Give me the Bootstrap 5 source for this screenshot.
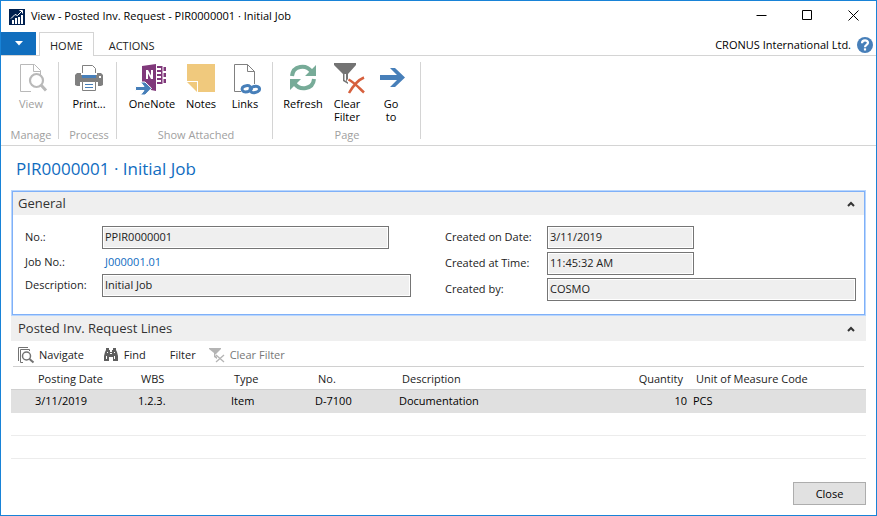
<!DOCTYPE html>
<html lang="en">
<head>
<meta charset="utf-8">
<meta name="viewport" content="width=device-width, initial-scale=1">
<title>View - Posted Inv. Request - PIR0000001 · Initial Job</title>
<link href="https://cdn.jsdelivr.net/npm/bootstrap@5.3.0/dist/css/bootstrap.min.css" rel="stylesheet">
<style>
  body { font-family: "Open Sans", "Noto Sans", sans-serif; font-size: 11px; line-height: 16px; color: #000; background: #fff; }
  button { color: inherit; }
  svg { display: block; overflow: visible; flex: none; }
  .app-window { border: 1px solid #1883d7; }
  .title-bar { height: 31px; padding-left: 8px; }
  .title-text { gap: 6px; }
  .title-bar h1 { font-size: 11px; line-height: 16px; font-weight: 400; padding-bottom: 2px; }
  .caption-btn { width: 46px; height: 29px; }
  .plain-btn { background: none; border: 0; padding: 0; }
  .tab-row { height: 24px; border-bottom: 1px solid #d4d4d4; }
  .file-btn { width: 35px; height: 23px; background: #106ebe; color: #fff; margin-right: 3px; }
  .ribbon-tab { height: 24px; padding: 0 10px; color: #222; text-decoration: none; border: 1px solid transparent; border-bottom: 0; line-height: 26px; }
  .ribbon-tab.current { border-color: #d4d4d4; background: #fff; }
  .company { padding: 2px 3px 0 0; gap: 6px; }
  .ribbon { height: 90px; border-bottom: 1px solid #d4d4d4; padding: 6px 0 0 0; }
  .ribbon-group { height: 77px; border-right: 1px solid #d4d4d4; padding: 0 5px 0 8px; }
  .ribbon-group:last-child { padding-right: 7px; }
  .ribbon-group .group-name { color: #a0a0a0; line-height: 8px; }
  .ribbon-btn { width: 44px; line-height: 13px; }
  .ribbon-btn.wide { width: 54px; }
  .ribbon-btn svg { margin: 0 auto 3px; }
  .ribbon-btn:disabled { color: #a0a0a0; }
  .page-title { color: #0f6cbf; font-size: 17px; line-height: 24px; font-weight: 400; padding: 11px 15px 9px; margin: 0; }
  .page-body { padding: 0 10px; }
  .general { border: 1px solid #b9d6fd; }
  .general-inner { border: 1px solid #7fb0f8; }
  .section-head { background: #efefef; color: #333; height: 23px; padding: 0 9px 0 5px; }
  .section-head h2 { font-size: 13px; line-height: 20px; font-weight: 400; margin: 0; padding-bottom: 1px; }
  .section-head.lines { height: 25px; padding: 0 11px 0 7px; }
  .general-fields { display: grid; grid-template-columns: 386fr 411fr; column-gap: 34px; padding: 11px 8px 13px 12px; color: #222; }
  .field-row { height: 23px; }
  .field-row.link-row { height: 25px; }
  .field-row label { flex: none; width: 77px; padding-bottom: 2px; }
  .field-row .field-label { flex: none; width: 77px; }
  .right-fields { row-gap: 3px; }
  .right-fields label { width: 102px; }
  .box { min-width: 0; height: 23px; border: 1px solid #757575; border-radius: 0; padding: 0 2px 2px; background: #efefef; box-shadow: inset 0 0 0 1px #fff; color: #222; outline: 0; }
  .box.short { flex: none; width: 147px; }
  .box.with-lookup { margin-right: 22px; }
  .job-link { color: #0f6cbf; text-decoration: none; padding-left: 3px; }
  .line-tools { height: 26px; margin: 0 2px; padding: 2px 0 0 5px; border-bottom: 1px solid #d0d0d0; color: #222; }
  .line-tools button { gap: 5px; }
  .line-tools .find-btn { margin: 0 24px 0 19px; }
  .line-tools .filter-btn { margin-right: 13px; }
  .line-tools button:disabled { color: #777; }
  .lines-table { width: 100%; table-layout: fixed; border-collapse: separate; border-spacing: 0; margin: 0; }
  .lines-table th, .lines-table td { padding: 0 2px; height: 23px; border-bottom: 1px solid #ececec; white-space: nowrap; }
  .lines-table th { font-weight: 400; color: #222; padding: 2px 5px 0; border-bottom-color: #d0d0d0; }
  .lines-table th.text-end { padding-right: 8px; }
  .lines-table td.text-end { padding-right: 4px; }
  .lines-table .picked td { background: #e0e0e0; border-bottom-color: #e0e0e0; }
  .c-lead { width: 22px; } .c-date { width: 103px; } .c-wbs { width: 93px; } .c-code { width: 84px; } .c-qty { width: 90px; } .c-unit { width: 175px; }
  .page-foot { padding: 0 10px 10px; }
  .close-btn { width: 73px; height: 23px; background: #e1e1e1; border: 1px solid #adadad; padding: 0; }
</style>
</head>
<body>
<div class="app-window d-flex flex-column min-vh-100">
  <header>
    <div class="title-bar d-flex align-items-start justify-content-between">
      <div class="title-text d-flex align-items-center h-100">
        <svg width="16" height="16" viewBox="0 0 16 16" aria-hidden="true">
          <path fill="#002050" d="M0 0h16v16H0z"/>
          <path fill="#fff" d="M3 11h2v4H3zM6 9h2v6H6zM9 8h2v7H9zM12 6h2v9h-2z"/>
          <path fill="none" stroke="#fff" d="M2 9.500 6 5.500l2.500 1L13 2M10.500 1.500h3v3"/>
        </svg>
        <h1 class="mb-0">View - Posted Inv. Request - PIR0000001 · Initial Job</h1>
      </div>
      <div class="d-flex">
        <button class="plain-btn caption-btn" type="button" aria-label="Minimize"><svg class="mx-auto" width="11" height="11" viewBox="0 0 11 11"><path stroke="#000" d="M.5 5.500h10"/></svg></button>
        <button class="plain-btn caption-btn" type="button" aria-label="Maximize"><svg class="mx-auto" width="11" height="11" viewBox="0 0 11 11"><path fill="none" stroke="#000" d="M.5.5h9v9h-9z"/></svg></button>
        <button class="plain-btn caption-btn" type="button" aria-label="Close window"><svg class="mx-auto" width="11" height="11" viewBox="0 0 11 11"><path stroke="#000" d="m.5.5 10 10M10.500.5l-10 10"/></svg></button>
      </div>
    </div>

    <nav class="tab-row d-flex justify-content-between">
      <div class="d-flex">
        <button class="plain-btn file-btn" type="button" aria-label="Application menu"><svg class="mx-auto" width="8" height="5" viewBox="0 0 8 5"><path fill="#fff" d="M0 0h8L4 4.500z"/></svg></button>
        <a class="ribbon-tab current" href="#">HOME</a>
        <a class="ribbon-tab ms-1" href="#">ACTIONS</a>
      </div>
      <div class="company d-flex align-items-center">
        <span>CRONUS International Ltd.</span>
        <button class="plain-btn" type="button" aria-label="Help"><svg width="16" height="16" viewBox="0 0 16 16"><circle cx="8" cy="8" r="8" fill="#477fb9"/><path fill="none" stroke="#fff" stroke-width="2.200" d="M5 6.200C5 2.500 11 2.600 11 5.800 11 8 8 7.800 8 10.200"/><path fill="#fff" d="M6.900 11.300h2.200v2.200H6.900z"/></svg></button>
      </div>
    </nav>

    <div class="ribbon d-flex">
      <section class="ribbon-group d-flex flex-column align-items-center justify-content-between">
        <button class="plain-btn ribbon-btn" type="button" disabled>
          <svg width="32" height="32" viewBox="0 0 32 32"><g fill="none" stroke="#b9b9b9"><path d="M16 29.500H5.500v-27h14l6 6V14M18.500 2.500v7h7"/><circle cx="21.500" cy="18.500" r="6.500" stroke-width="2.200"/><path stroke-width="3" d="m26 23 5 5.500"/></g></svg>View
        </button>
        <span class="group-name">Manage</span>
      </section>
      <section class="ribbon-group d-flex flex-column align-items-center justify-content-between">
        <button class="plain-btn ribbon-btn" type="button">
          <svg width="32" height="32" viewBox="0 0 32 32"><path fill="#808080" d="M4 11h24l2 2v10l-2 1h-3v-4H7v4H4l-2-1V13z"/><path fill="#fff" stroke="#808080" d="M9.500 14V3.500h10l3 3V14M9.500 19.500h13v9h-13z"/><path fill="#fff" d="M8 11h16v2H8z"/><path fill="#477fb9" d="M9 13h14v3H9zM12 22h8v1h-8zM12 25h8v1h-8z"/><path fill="#fff" d="M26 14h2v2h-2z"/></svg>Print...
        </button>
        <span class="group-name">Process</span>
      </section>
      <section class="ribbon-group d-flex flex-column align-items-center justify-content-between">
        <div class="d-flex align-items-start">
          <button class="plain-btn ribbon-btn wide" type="button">
            <svg width="32" height="32" viewBox="0 0 32 32"><path fill="#80397b" d="m6 4 14-2v27l-5-1-6-7H6z"/><path fill="#80397b" d="M21 4h5v2h-5zM21 20h5v2h-5zM21 8h4v2h-4zM21 12h4v2h-4zM21 16h4v2h-4zM25 4h1.500v18H25zM27.500 5H30v4h-2.500zM27.500 11H30v4h-2.500zM27.500 17H30v4h-2.500z"/><path fill="#fff" d="M10 8h2l3 5.500V8h2v9h-2l-3-5.500V17h-2z"/><path fill="#477fb9" stroke="#fff" d="M-.5 24.500H8L4.500 20H9l6.500 6.300L9 33H4.500L8 28.500H-.5z"/></svg>OneNote
          </button>
          <button class="plain-btn ribbon-btn" type="button">
            <svg width="32" height="32" viewBox="0 0 32 32"><path fill="#f0c97d" d="M2 2h28v28H13V19H2z"/><path fill="#f0c97d" d="M2 20h10v10z"/></svg>Notes
          </button>
          <button class="plain-btn ribbon-btn" type="button">
            <svg width="32" height="32" viewBox="0 0 32 32"><path fill="none" stroke="#808080" d="M12 29.500H5.500v-27h13l7 7V22M18.500 2.500v7h7"/><g fill="none" stroke="#477fb9" stroke-width="3" stroke-linecap="round"><path d="M21 24.500c-1.500-1.500-6-1-7.500 1-1.500 2.500.5 4.500 3 4.500 3 0 4.500-.5 6-3"/><path d="M22.500 30.200c1.500 1 6 .5 7.500-1.500 1.500-2.500-.5-4.500-3-4.500-3 0-4.500.5-6 3"/></g></svg>Links
          </button>
        </div>
        <span class="group-name">Show Attached</span>
      </section>
      <section class="ribbon-group d-flex flex-column align-items-center justify-content-between">
        <div class="d-flex align-items-start">
          <button class="plain-btn ribbon-btn" type="button">
            <svg width="32" height="32" viewBox="0 0 32 32"><g fill="none" stroke="#77ab98" stroke-width="4"><path d="M5 14C6 3.500 19 2 24.500 9.500M27 17C26 27.500 13 29 7.500 21.500"/></g><path fill="#77ab98" d="M29 3v11H18zM3 28V17h11z"/></svg>Refresh
          </button>
          <button class="plain-btn ribbon-btn" type="button">
            <svg width="32" height="32" viewBox="0 0 32 32"><path fill="#737373" d="M3 1h22v2l-8 9v10l-5-3v-7L3 3z"/><path fill="#fff" d="M13.500 12h1.500v7l-1.500-1z"/><path fill="none" stroke="#fff" stroke-width="5" d="m17 17 16 14M33 15 17 31"/><path fill="none" stroke="#d6603d" stroke-width="2.500" d="M17.500 17.500C24 21 28 26 33 30.500M33 15.500C27 18 22 24 18 31"/></svg>Clear<br>Filter
          </button>
          <button class="plain-btn ribbon-btn" type="button">
            <svg width="32" height="32" viewBox="0 0 32 32"><path fill="#477fb9" d="M5 13h17l-7-7h5l10 9.500L20 25h-5l7-7H5z"/></svg>Go<br>to
          </button>
        </div>
        <span class="group-name">Page</span>
      </section>
    </div>
  </header>

  <main>
    <h2 class="page-title">PIR0000001 · Initial Job</h2>
    <div class="page-body">
      <section class="general">
        <div class="general-inner">
          <div class="section-head d-flex align-items-center justify-content-between">
            <h2>General</h2>
            <button class="plain-btn" type="button" aria-label="Collapse General"><svg width="8" height="6" viewBox="0 0 8 6"><path fill="none" stroke="#333" stroke-width="2" d="m1 5 3-3 3 3"/></svg></button>
          </div>
          <div class="general-fields">
            <div>
              <div class="field-row d-flex align-items-center"><label for="f-no">No.:</label><input id="f-no" class="box with-lookup flex-grow-1" value="PPIR0000001" readonly></div>
              <div class="field-row link-row d-flex align-items-center"><span class="field-label">Job No.:</span><a class="job-link" href="#">J000001.01</a></div>
              <div class="field-row d-flex align-items-center"><label for="f-desc">Description:</label><input id="f-desc" class="box flex-grow-1" value="Initial Job" readonly></div>
            </div>
            <div class="right-fields d-grid align-content-start">
              <div class="field-row d-flex align-items-center"><label for="f-date">Created on Date:</label><input id="f-date" class="box short" value="3/11/2019" readonly></div>
              <div class="field-row d-flex align-items-center"><label for="f-time">Created at Time:</label><input id="f-time" class="box short" value="11:45:32 AM" readonly></div>
              <div class="field-row d-flex align-items-center"><label for="f-by">Created by:</label><input id="f-by" class="box flex-grow-1" value="COSMO" readonly></div>
            </div>
          </div>
        </div>
      </section>

      <section>
        <div class="section-head lines d-flex align-items-center justify-content-between">
          <h2>Posted Inv. Request Lines</h2>
          <button class="plain-btn" type="button" aria-label="Collapse Posted Inv. Request Lines"><svg width="8" height="6" viewBox="0 0 8 6"><path fill="none" stroke="#333" stroke-width="2" d="m1 5 3-3 3 3"/></svg></button>
        </div>
        <div class="line-tools d-flex align-items-center">
          <button class="plain-btn d-flex align-items-center" type="button"><svg width="16" height="16" viewBox="0 0 16 16"><g fill="none" stroke="#737373"><path d="M.5 14V.5H10M5 15.500H2.500v-13h9V4"/><circle cx="8.500" cy="9" r="4" stroke-width="1.500"/><path stroke-width="2" d="m11.500 12 4 3.500"/></g></svg>Navigate</button>
          <button class="plain-btn find-btn d-flex align-items-center" type="button"><svg width="16" height="16" viewBox="0 0 16 16"><path fill="#5f5f5f" d="M3 1h3v2h1v2h2V3h1V1h3v2l1 2 1 4v5h-5v-4H6v4H1V9l1-4 1-2z"/><path fill="#fff" d="M4 5h1v1H4zM11 5h1v1h-1zM3 9h1v3H3zM11 9h1v3h-1zM7 6h2v1H7z"/></svg>Find</button>
          <button class="plain-btn filter-btn" type="button">Filter</button>
          <button class="plain-btn d-flex align-items-center" type="button" disabled><svg width="16" height="16" viewBox="0 0 16 16"><path fill="#b4b4b4" d="M0 1h12v1L8 6v6l-3-2V6L0 2z"/><path fill="none" stroke="#fff" stroke-width="3" d="m7 7 8 8M15 7l-8 8"/><path fill="none" stroke="#b4b4b4" stroke-width="1.300" d="m7 8 8 7M15 8l-8 7"/></svg>Clear Filter</button>
        </div>
        <table class="lines-table">
          <colgroup><col class="c-lead"><col class="c-date"><col class="c-wbs"><col class="c-code"><col class="c-code"><col><col class="c-qty"><col class="c-unit"></colgroup>
          <thead><tr><th></th><th>Posting Date</th><th>WBS</th><th>Type</th><th>No.</th><th>Description</th><th class="text-end">Quantity</th><th>Unit of Measure Code</th></tr></thead>
          <tbody>
            <tr class="picked"><td></td><td>3/11/2019</td><td>1.2.3.</td><td>Item</td><td>D-7100</td><td>Documentation</td><td class="text-end">10</td><td>PCS</td></tr>
            <tr><td colspan="8"></td></tr>
            <tr><td colspan="8"></td></tr>
          </tbody>
        </table>
      </section>
    </div>
  </main>

  <footer class="page-foot d-flex justify-content-end mt-auto">
    <button class="close-btn" type="button">Close</button>
  </footer>
</div>
<script src="https://cdn.jsdelivr.net/npm/bootstrap@5.3.0/dist/js/bootstrap.bundle.min.js"></script>
</body>
</html>
